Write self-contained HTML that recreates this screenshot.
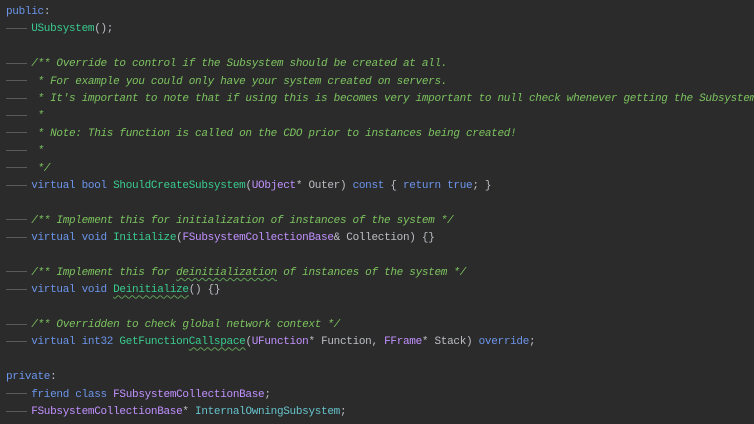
<!DOCTYPE html>
<html><head><meta charset="utf-8"><style>
html,body{margin:0;padding:0;background:#2b2b2b;width:754px;height:424px;overflow:hidden}
.c{position:absolute;left:6px;top:4px;font-family:"Liberation Mono",monospace;font-size:11px;letter-spacing:-0.3px;line-height:17.4px;color:#bcbec4}
.l{height:17.4px;position:relative;white-space:pre}
.d{display:inline-block;width:21px;height:0;border-top:1px solid #5a5a5a;vertical-align:middle;margin-right:4.2px}
.k{color:#6c95eb}.f{color:#39cc8f}.t{color:#c191ff}.m{color:#7cc35f;font-style:italic}.v{color:#66c3cc}
.u{text-decoration:underline wavy #5f9e58;text-decoration-thickness:1px;text-underline-offset:2px}
</style></head><body><div class="c"><div class="l"><span class="k">public</span>:</div><div class="l"><span class="d"></span><span class="f">USubsystem</span>();</div><div class="l"></div><div class="l"><span class="d"></span><span class="m">/** Override to control if the Subsystem should be created at all.</span></div><div class="l"><span class="d"></span><span class="m"> * For example you could only have your system created on servers.</span></div><div class="l"><span class="d"></span><span class="m"> * It's important to note that if using this is becomes very important to null check whenever getting the Subsystem.</span></div><div class="l"><span class="d"></span><span class="m"> *</span></div><div class="l"><span class="d"></span><span class="m"> * Note: This function is called on the CDO prior to instances being created!</span></div><div class="l"><span class="d"></span><span class="m"> *</span></div><div class="l"><span class="d"></span><span class="m"> */</span></div><div class="l"><span class="d"></span><span class="k">virtual bool </span><span class="f">ShouldCreateSubsystem</span>(<span class="t">UObject</span>* Outer) <span class="k">const</span> { <span class="k">return true</span>; }</div><div class="l"></div><div class="l"><span class="d"></span><span class="m">/** Implement this for initialization of instances of the system */</span></div><div class="l"><span class="d"></span><span class="k">virtual void </span><span class="f">Initialize</span>(<span class="t">FSubsystemCollectionBase</span>&amp; Collection) {}</div><div class="l"></div><div class="l"><span class="d"></span><span class="m">/** Implement this for <span class="u">deinitialization</span> of instances of the system */</span></div><div class="l"><span class="d"></span><span class="k">virtual void </span><span class="f u">Deinitialize</span>() {}</div><div class="l"></div><div class="l"><span class="d"></span><span class="m">/** Overridden to check global network context */</span></div><div class="l"><span class="d"></span><span class="k">virtual int32 </span><span class="f">GetFunction<span class="u">Callspace</span></span>(<span class="t">UFunction</span>* Function, <span class="t">FFrame</span>* Stack) <span class="k">override</span>;</div><div class="l"></div><div class="l"><span class="k">private</span>:</div><div class="l"><span class="d"></span><span class="k">friend class </span><span class="t">FSubsystemCollectionBase</span>;</div><div class="l"><span class="d"></span><span class="t">FSubsystemCollectionBase</span>* <span class="v">InternalOwningSubsystem</span>;</div></div></body></html>
